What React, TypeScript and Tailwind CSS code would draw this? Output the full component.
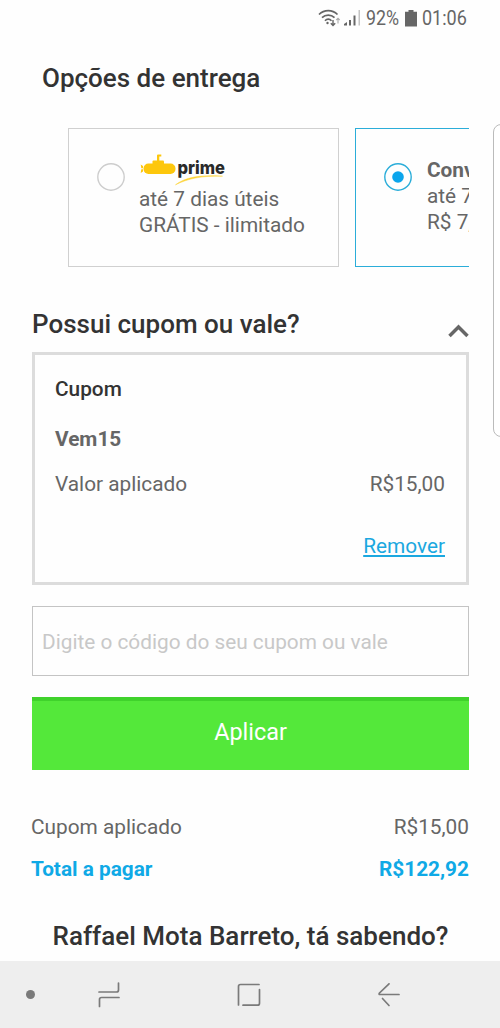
import type { ReactNode } from 'react';

interface DeliveryCardProps {
  selected?: boolean;
  title: ReactNode;
  deadline: string;
  price: string;
}

function StatusBar() {
  return (
    <div className="flex h-9 items-center justify-end pr-8 text-[#666]">
      <svg width="24" height="18" viewBox="0 0 24 18" fill="none" stroke="currentColor" strokeWidth="1.7">
        <path d="M1 5.5C6.200.4 14.300.4 19.500 5.500" />
        <path d="M4 8.700C7.500 5.200 13 5.200 16.500 8.700" />
        <path d="M7 11.800C9 9.600 11.500 9.600 13.500 11.800" />
        <circle cx="9.500" cy="14" r="1.200" fill="currentColor" stroke="none" />
        <path d="M15 11v5.500M12.800 14.200l2.200 2.300 2.200-2.300" strokeWidth="1.400" />
        <path d="M20 14.500v-5M18.300 11l1.700-1.800 1.700 1.800" stroke="#aaa" strokeWidth="1.100" />
      </svg>
      <svg className="ml-0.5" width="18" height="18" viewBox="0 0 18 18" fill="currentColor">
        <path d="M0 16.500v-1.500L3 13v3.500z" />
        <path d="M5 11h2v5.500H5z" />
        <path d="M9.500 6.500h2v10h-2z" />
        <path d="M14.500 1h1.500v15.500h-1.500z" fill="#c4c4c4" />
      </svg>
      <span className="ml-[4px] inline-block w-[33px] origin-left scale-x-[0.89] whitespace-nowrap text-[20px] leading-6">92%</span>
      <svg className="ml-[6px]" width="12" height="17" viewBox="0 0 12 17" fill="currentColor">
        <path d="M3.500 0h5v1.800H12V16.500H0V1.800h3.500z" />
      </svg>
      <span className="ml-[5px] inline-block w-[46px] origin-left scale-x-[0.9] whitespace-nowrap text-[20px] leading-6">01:06</span>
    </div>
  );
}

function PrimeLogo() {
  return (
    <svg className="block overflow-visible" width="88" height="32" viewBox="0 0 88 32">
      <g fill="#fdc70c">
        <rect x="4.500" y="9.500" width="32" height="10.500" rx="5" />
        <path d="M1.700 10.500l2.300 1.500v2.300H2.300zM2.300 15.300H4v2.300L1.700 19z" />
        <rect x="13.500" y="6.500" width="11.500" height="5" rx="1" />
        <path d="M18 7V1.500q0-1 1-1h3.300v2h-2V7z" />
      </g>
      <text
        x="38.500"
        y="19.500"
        fontSize="18.500"
        fontWeight="800"
        fill="#292929"
        fontFamily="Inter, sans-serif"
        textLength="47.500"
        lengthAdjust="spacingAndGlyphs"
      >
        prime
      </text>
      <path d="M36.500 30.800C46 23.500 60 20.500 83.500 22.200C63 21.600 49 24.500 36.500 30.800z" fill="#fdd233" stroke="#fdd233" strokeWidth=".5" />
    </svg>
  );
}

function DeliveryCard({ selected, title, deadline, price }: DeliveryCardProps) {
  return (
    <div
      className={`flex h-[139px] w-[271px] shrink-0 border pl-7 ${
        selected ? 'border-[#2badd9]' : 'border-[#d0d0d0]'
      }`}
    >
      <svg className="mt-[34px] shrink-0" width="28" height="28" viewBox="0 0 28 28" fill="none">
        <circle cx="14" cy="14" r="13.200" stroke={selected ? '#2badd9' : '#cdcdcd'} strokeWidth="1.400" />
        {selected && <circle cx="14" cy="14" r="5.800" fill="#0ba5ec" />}
      </svg>
      <div className={`mt-[25px] whitespace-nowrap text-[20.8px] leading-[26px] text-[#666] ${selected ? 'ml-[15px]' : 'ml-[14px]'}`}>
        {title}
        <div>{deadline}</div>
        <div>{price}</div>
      </div>
    </div>
  );
}

function NavBar() {
  return (
    <nav className="flex h-[67px] items-center bg-[#eee] text-[#7a7a7a]">
      <div className="ml-[26px] h-[9px] w-[9px] rounded-full bg-[#7a7a7a]" />
      <svg className="ml-[63px]" width="22" height="26" viewBox="0 0 22 26" fill="none" stroke="currentColor" strokeWidth="1.700" strokeLinecap="round">
        <path d="M1 10h17.500q2 0 2-2V1" />
        <path d="M21 15.500H3.500q-2 0-2 2v7" />
      </svg>
      <svg className="ml-[117px]" width="24" height="24" viewBox="0 0 24 24" fill="none" stroke="currentColor" strokeWidth="1.700" strokeLinecap="round">
        <path d="M1.500 22V3.500q0-2 2-2H22" />
        <path d="M6 22.200h14.500q2 0 2-2V6.500" />
      </svg>
      <svg className="ml-[117px]" width="22" height="24" viewBox="0 0 22 24" fill="none" stroke="currentColor" strokeWidth="1.700" strokeLinecap="round">
        <path d="M11 .8L1.500 10q-1 1.500.5 1.500H21" />
        <path d="M4.500 15.500l6.500 7" />
      </svg>
    </nav>
  );
}

export default function App() {
  return (
    <div
      className="relative flex h-[1028px] w-[500px] flex-col overflow-hidden bg-[#fefefe] text-[20.8px] text-[#666]"
      style={{ fontFamily: 'Roboto, sans-serif' }}
    >
      <StatusBar />

      <main className="flex flex-1 flex-col pl-8 pr-[31px]">
        <h1 className="ml-[10px] mt-[26px] text-[26px] font-medium leading-8 text-[#333]">Opções de entrega</h1>

        {/* Delivery carousel */}
        <div className="ml-9 mt-[34px] flex gap-4 overflow-hidden">
          <DeliveryCard title={<PrimeLogo />} deadline="até 7 dias úteis" price="GRÁTIS - ilimitado" />
          <DeliveryCard
            selected
            title={<strong className="block pt-[3px] font-bold">Convencional</strong>}
            deadline="até 7 dias úteis"
            price="R$ 7,99"
          />
        </div>

        {/* Coupon */}
        <div className="mt-[41px] flex h-8 items-center justify-between">
          <h2 className="text-[26px] font-medium leading-8 text-[#333]">Possui cupom ou vale?</h2>
          <svg className="mt-[14px]" width="21" height="14" viewBox="0 0 21 14" fill="none" stroke="#666" strokeWidth="3.500">
            <path d="M1.500 12L10.500 3L19.500 12" />
          </svg>
        </div>
        <section className="mt-3 h-[233px] border-[3px] border-[#dcdcdc] pl-5 pr-[21px] pt-[21px] leading-[26px]">
          <h3 className="font-medium text-[#333]">Cupom</h3>
          <p className="mt-6 font-bold">Vem15</p>
          <div className="mt-[19px] flex justify-between">
            <span>Valor aplicado</span>
            <span>R$15,00</span>
          </div>
          <div className="mt-9 text-right">
            <a href="#" className="text-[#1ba8e0] underline">Remover</a>
          </div>
        </section>

        <input
          className="mt-[21px] h-[70px] w-full border border-[#c4c4c4] px-[9px] pt-px placeholder:text-[#c8c8c8]"
          placeholder="Digite o código do seu cupom ou vale"
        />
        <button className="mt-[21px] h-[73px] border-t-4 border-[#40d22c] bg-[#54e83a] pb-[5px] text-[23.4px] text-white">
          Aplicar
        </button>

        <div className="-ml-px mt-[44px] flex justify-between leading-[26px]">
          <span>Cupom aplicado</span>
          <span>R$15,00</span>
        </div>
        <div className="-ml-px mt-4 flex justify-between font-bold leading-[26px] text-[#0fa9e6]">
          <span>Total a pagar</span>
          <span>R$122,92</span>
        </div>
        <h2 className="mt-[38px] whitespace-nowrap text-center text-[26px] font-medium leading-8 text-[#333]">
          Raffael Mota Barreto, tá sabendo?
        </h2>
      </main>

      <NavBar />

      {/* Edge panel handle */}
      <div className="absolute -right-2 top-[124px] h-[313px] w-[15px] rounded-l-lg border border-[#bbb] bg-white" />
    </div>
  );
}
